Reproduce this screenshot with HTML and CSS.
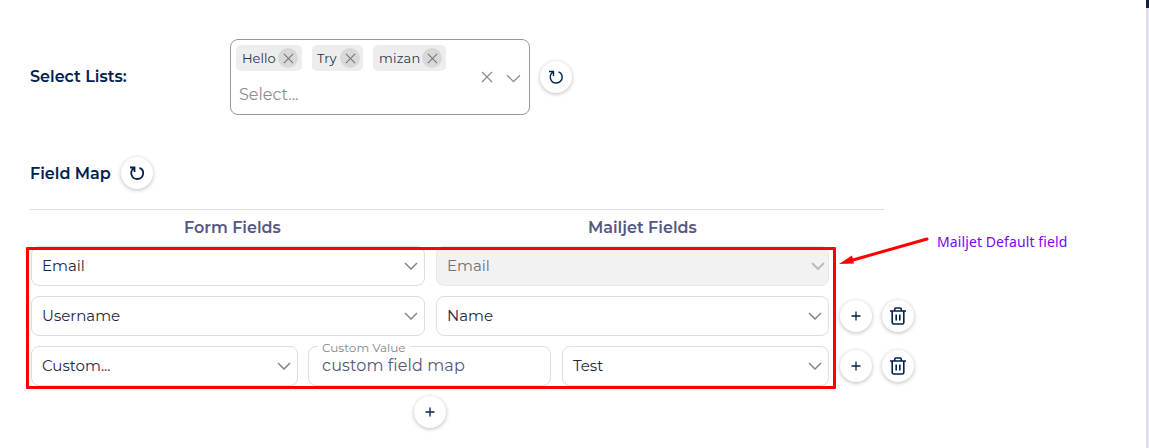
FILE: index.html
```html
<!DOCTYPE html>
<html lang="en">
<head>
<meta charset="utf-8">
<title>Mailjet Field Map</title>
<link rel="stylesheet" href="styles.css">
</head>
<body>
<svg class="defs" width="0" height="0">
  <symbol id="chevron" viewBox="0 0 14 8"><path d="M1 1l6 6 6-6"/></symbol>
  <symbol id="cross" viewBox="0 0 12 12"><path d="M1 1l10 10M11 1L1 11"/></symbol>
  <symbol id="plus" viewBox="0 0 10 10"><path d="M5 .5v9M.5 5h9"/></symbol>
  <symbol id="refresh" viewBox="0 0 16 16"><path d="M1 2.500h4.500v4.500M5.300 2.800C2.500 4.800 1.700 7.600 2.700 10.200c.9 2.500 3 3.800 5.500 3.800 3.400 0 6-2.500 6-5.900 0-2.300-1.300-4.300-3.700-5.200"/></symbol>
  <symbol id="trash" viewBox="0 0 16 18"><path d="M0 4h16M4.700 4V2.300Q4.700 1 6 1h4q1.300 0 1.300 1.300V4M2.200 4v11.500Q2.200 17 3.700 17h8.600q1.500 0 1.500-1.500V4M6.200 7.500v6M9.800 7.500v6"/></symbol>
</svg>
<main class="page">
  <section class="lists">
    <span class="label label-lists">Select Lists:</span>
    <div class="multi">
      <div class="values">
        <div class="chips">
          <span class="chip hello"><span>Hello</span><i><svg><use href="#cross"/></svg></i></span>
          <span class="chip try"><span>Try</span><i><svg><use href="#cross"/></svg></i></span>
          <span class="chip mizan"><span>mizan</span><i><svg><use href="#cross"/></svg></i></span>
        </div>
        <span class="placeholder">Select...</span>
      </div>
      <svg class="clear"><use href="#cross"/></svg>
      <svg class="open"><use href="#chevron"/></svg>
    </div>
    <button class="round"><svg class="refresh"><use href="#refresh"/></svg></button>
  </section>
  <section class="map-title">
    <span class="label label-map">Field Map</span>
    <button class="round"><svg class="refresh bold"><use href="#refresh"/></svg></button>
  </section>
  <div class="heads"><span class="head-form">Form Fields</span><span class="head-mail">Mailjet Fields</span></div>
  <section class="rows">
    <div class="row">
      <div class="select half"><span>Email</span><svg><use href="#chevron"/></svg></div>
      <div class="select half disabled"><span>Email</span><svg><use href="#chevron"/></svg></div>
    </div>
    <div class="row">
      <div class="select half"><span>Username</span><svg><use href="#chevron"/></svg></div>
      <div class="select half"><span>Name</span><svg><use href="#chevron"/></svg></div>
      <div class="actions"><button class="round"><svg class="plus"><use href="#plus"/></svg></button><button class="round"><svg class="trash"><use href="#trash"/></svg></button></div>
    </div>
    <div class="row">
      <div class="select third"><span>Custom...</span><svg><use href="#chevron"/></svg></div>
      <div class="field"><span class="legend"><span>Custom Value</span></span><span class="value">custom field map</span></div>
      <div class="select third"><span>Test</span><svg><use href="#chevron"/></svg></div>
      <div class="actions"><button class="round"><svg class="plus"><use href="#plus"/></svg></button><button class="round"><svg class="trash"><use href="#trash"/></svg></button></div>
    </div>
  </section>
  <div class="add"><button class="round"><svg class="plus"><use href="#plus"/></svg></button></div>
</main>
<div class="highlight"></div>
<svg class="arrow" viewBox="0 0 90 30"><path d="M88 3L14 24" stroke="#f00" stroke-width="3" stroke-linecap="round"/><path d="M0 28L13 19.500 15 27.500z" fill="#f00"/></svg>
<span class="note">Mailjet Default field</span>
<div class="edge"></div>
</body>
</html>
```
FILE: styles.css
```css
* { box-sizing: border-box; }
body {
  margin: 0;
  height: 448px;
  overflow: hidden;
  background: #fff;
  color: #14213f;
  font-family: Montserrat, Inter, sans-serif;
  font-size: 15px;
  line-height: 20px;
}
svg { display: block; fill: none; stroke: currentColor; flex: none; }
.defs { position: absolute; }
.page { width: 920px; padding: 39px 0 0 30px; }
span { white-space: nowrap; }

.lists { display: flex; align-items: center; height: 76px; }
.label { color: #00214d; font-size: 16px; font-weight: 600; }
.label-lists { width: 200px; }
.multi {
  display: flex;
  width: 300px;
  height: 76px;
  margin-right: 10px;
  padding: 5px 9px 0 5px;
  border: 1px solid #999;
  border-radius: 8px;
  color: #8c8c8c;
}
.values { width: 246px; flex: none; }
.chips { display: flex; gap: 10px; }
.chip {
  display: flex;
  align-items: center;
  justify-content: space-between;
  height: 26px;
  padding: 0 4px 0 6px;
  border-radius: 5px;
  background: #ededed;
  color: #263450;
  font-size: 13px;
}
.chip i { display: grid; place-items: center; width: 20px; height: 20px; border-radius: 50%; background: #d8d8d8; color: #777; }
.chip svg { width: 11px; height: 11px; stroke-width: 1.2; }
.hello { width: 66px; }
.try { width: 51px; padding-left: 5px; padding-right: 3px; }
.mizan { width: 73px; letter-spacing: .2px; }
.placeholder { display: block; margin: 14px 0 0 3px; font-size: 16px; }
.clear { width: 12px; height: 12px; margin: 26px 0 0 -1px; stroke-width: 1.2; }
.open { width: 15px; height: 9px; margin: 29px 0 0 13px; stroke-width: 1.2; }
.round {
  display: grid;
  place-items: center;
  width: 32px;
  height: 32px;
  padding: 0;
  border: 0;
  border-radius: 50%;
  background: #fff;
  color: #00214d;
  box-shadow: 0 1px 4px rgba(0, 0, 0, .27);
}
.refresh { width: 16px; height: 16px; stroke-width: 1.4; }
.bold { stroke-width: 1.8; }
.plus { width: 10px; height: 10px; stroke-width: 1.3; }
.trash { width: 16px; height: 18px; stroke-width: 1.6; }

.map-title { display: flex; align-items: center; height: 32px; margin-top: 42px; }
.label-map { width: 91px; padding-top: 1px; }
.heads {
  display: flex;
  width: 854px;
  height: 37px;
  margin-top: 20px;
  padding-top: 8px;
  border-top: 1px solid #ddd;
  color: #555783;
  font-size: 16px;
  font-weight: 600;
}
.head-form { width: 404px; padding-left: 154px; }
.head-mail { padding-left: 154px; }
.rows { display: flex; flex-direction: column; gap: 10px; padding-left: 1px; }
.row { display: flex; gap: 11px; height: 40px; }
.select {
  display: flex;
  align-items: center;
  justify-content: space-between;
  padding: 0 6px 0 10px;
  border: 1px solid #dedede;
  border-radius: 8px;
  color: #1c2842;
}
.half { width: 394px; }
.half + .half { width: 393px; }
.third { width: 267px; }
.third:first-child { margin-right: -1px; }
.select svg { width: 14px; height: 8px; color: #858585; stroke-width: 1.5; }
.disabled { padding-right: 3px; background: #f2f2f2; color: #707070; border-color: #e8e8e8; }
.disabled svg { color: #bbb; stroke-width: 2; }
.field { width: 243px; padding: 0 13px; border: 1px solid #dedede; border-radius: 8px; }
.legend { display: block; width: 92px; height: 12px; margin: -5px 0 0 -4px; padding-left: 4px; background: #fff; color: #858585; font-size: 12px; line-height: 12px; }
.value { display: block; margin-top: 2px; color: #535776; font-size: 16px; line-height: 20px; letter-spacing: .12px; }
.actions { display: flex; gap: 10px; align-items: center; }

.add { display: flex; margin-top: 10px; padding-left: 384px; }
.highlight { position: absolute; left: 26px; top: 247px; width: 810px; height: 142px; border: 3px solid #f00; border-radius: 1px; }
.arrow { position: absolute; left: 839px; top: 236px; width: 90px; height: 30px; stroke: none; }
.note { position: absolute; left: 937px; top: 232px; color: #8000ff; font-family: "Noto Sans", sans-serif; font-size: 14px; letter-spacing: .1px; }
.edge { position: absolute; right: 0; top: 0; width: 3px; height: 448px; background: linear-gradient(#14213d 8px, #dfe1ee 8px); }
```
